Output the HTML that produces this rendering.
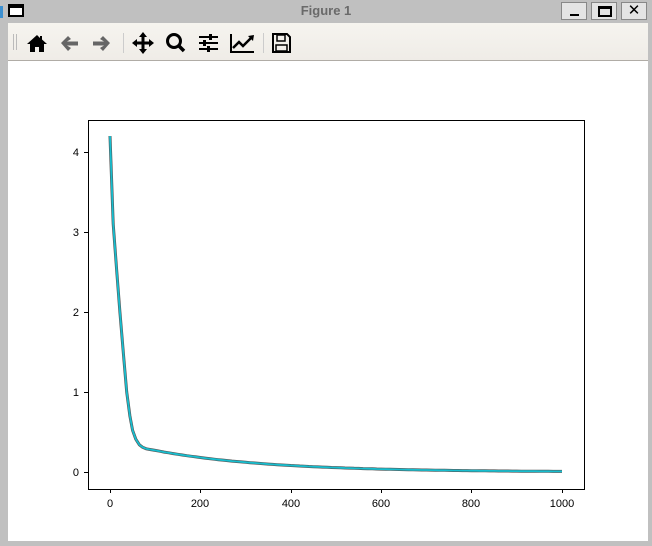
<!DOCTYPE html>
<html><head><meta charset="utf-8"><style>
*{margin:0;padding:0;box-sizing:border-box}
body{width:652px;height:546px;background:#c0c0c0;position:relative;overflow:hidden;font-family:"Liberation Sans","DejaVu Sans",sans-serif}
.title{position:absolute;left:0;top:0;width:652px;height:22px;background:#c0c0c0}
.title .t{position:absolute;left:0;width:652px;text-align:center;top:3px;font-size:13px;font-weight:bold;color:#6a6a6a}
.wicon{position:absolute;left:8px;top:4px;width:16px;height:13px;border:2px solid #000;border-top-width:4px;background:#fff}
.btn{position:absolute;top:2px;width:26px;height:18px;background:#e4e4e4;border:1px solid #888;}
.tb{position:absolute;left:8px;top:23px;width:640px;height:38px;background:linear-gradient(#f6f4ef,#efece7);border-bottom:1px solid #b0aca6}
.canvas{position:absolute;left:8px;top:61px;width:640px;height:480px;background:#fff}
svg{position:absolute;left:0;top:0}
</style></head><body>
<div class="title"><div class="t">Figure 1</div></div>
<div class="wicon"></div>
<div style="position:absolute;left:0;top:6px;width:3px;height:12px;background:#3b8fd0"></div>
<div class="btn" style="left:561px"><div style="position:absolute;left:8px;top:11px;width:9px;height:2px;background:#000"></div></div>
<div class="btn" style="left:591px"><div style="position:absolute;left:6px;top:3px;width:14px;height:11px;border:2px solid #000;border-top-width:3px"></div></div>
<div class="btn" style="left:621px;font-size:15px;font-weight:bold;text-align:center;line-height:16px">✕</div>
<div class="tb"></div>
<div class="canvas"></div>
<svg width="652" height="546" viewBox="0 0 652 546">
<g fill="#000">
<g fill="#bbb"><rect x="13" y="34" width="1" height="16"/><rect x="16" y="34" width="1" height="16"/></g>
<path d="M37 35 L27 44 L30 44 L30 52 L35 52 L35 47 L39 47 L39 52 L44 52 L44 44 L47 44 L42 39.5 L42 36 L40 36 L40 38 Z"/>
<path d="M61 43 L68 36 L71 39 L67 41.5 L78 41.5 L78 45.5 L67 45.5 L71 48 L68 51 Z" fill="#666"/>
<path d="M110 43 L103 36 L100 39 L104 41.5 L93 41.5 L93 45.5 L104 45.5 L100 48 L103 51 Z" fill="#666"/>
<rect x="123" y="33" width="1" height="20" fill="#ccc"/>
<path d="M143 32 L147 37 L144.5 37 L144.5 41.5 L149 41.5 L149 39 L154 43 L149 47 L149 44.5 L144.5 44.5 L144.5 49 L147 49 L143 54 L139 49 L141.5 49 L141.5 44.5 L137 44.5 L137 47 L132 43 L137 39 L137 41.5 L141.5 41.5 L141.5 37 L139 37 Z"/>
<circle cx="174" cy="41" r="6.5" fill="none" stroke="#000" stroke-width="3"/>
<path d="M178 45 L184 51" stroke="#000" stroke-width="3.5"/>
<g><rect x="199" y="36" width="19" height="2"/><rect x="199" y="42" width="19" height="2"/><rect x="199" y="48" width="19" height="2"/>
<rect x="209" y="34" width="3" height="6"/><rect x="203" y="40" width="3" height="6"/><rect x="207" y="46" width="3" height="6"/></g>
<path d="M231 34 L231 52 L254 52" fill="none" stroke="#000" stroke-width="2"/>
<path d="M233 48 L239 42 L243 46 L251 38" fill="none" stroke="#000" stroke-width="2.5"/>
<path d="M248 36 L254 35 L253 41 Z"/>
<rect x="263" y="33" width="1" height="20" fill="#ccc"/>
<path d="M273 34 L287 34 L290 37 L290 52 L273 52 Z" fill="none" stroke="#000" stroke-width="2"/>
<rect x="277" y="35" width="8" height="6" fill="none" stroke="#000" stroke-width="1.5"/>
<rect x="276" y="45" width="11" height="6" fill="none" stroke="#000" stroke-width="1.5"/>
</g>
<rect x="88.5" y="120.5" width="496" height="369" fill="none" stroke="#000" stroke-width="1"/>
<g stroke="#000" stroke-width="1">
<path d="M110.5 489 v4 M200.5 489 v4 M291.5 489 v4 M381.5 489 v4 M471.5 489 v4 M562.5 489 v4"/>
<path d="M88 472.5 h-4 M88 392.5 h-4 M88 312.5 h-4 M88 232.5 h-4 M88 152.5 h-4"/>
</g>
<g font-size="11" font-family="Liberation Sans,DejaVu Sans,sans-serif" fill="#000" text-anchor="middle">
<text x="110" y="507">0</text><text x="200" y="507">200</text><text x="291" y="507">400</text><text x="381" y="507">600</text><text x="471" y="507">800</text><text x="562" y="507">1000</text>
<g text-anchor="end"><text x="79" y="476">0</text><text x="79" y="396">1</text><text x="79" y="316">2</text><text x="79" y="236">3</text><text x="79" y="156">4</text></g>
</g>
<polyline id="c1" fill="none" stroke="#555" stroke-width="3"/>
<polyline id="c2" fill="none" stroke="#17becf" stroke-width="1.8"/>
</svg>
<script>
var k=[[0,4.2],[7,3.1],[15,2.5],[22,2.0],[30,1.45],[37,1.0],[44,0.7],[50,0.52],[57,0.41],[65,0.34],[72,0.31],[80,0.29],[90,0.28],[100,0.27]];
var p=[];
k.forEach(function(a){p.push((110+a[0]*0.452).toFixed(1)+","+(472-a[1]*80).toFixed(1));});
for(var x=110;x<=1000;x+=10){
 var y=0.27*Math.exp(-(x-100)/250);
 p.push((110+x*0.452).toFixed(1)+","+(472-y*80).toFixed(1));
}
document.getElementById("c1").setAttribute("points",p.join(" "));
document.getElementById("c2").setAttribute("points",p.join(" "));
</script>
</body></html>
